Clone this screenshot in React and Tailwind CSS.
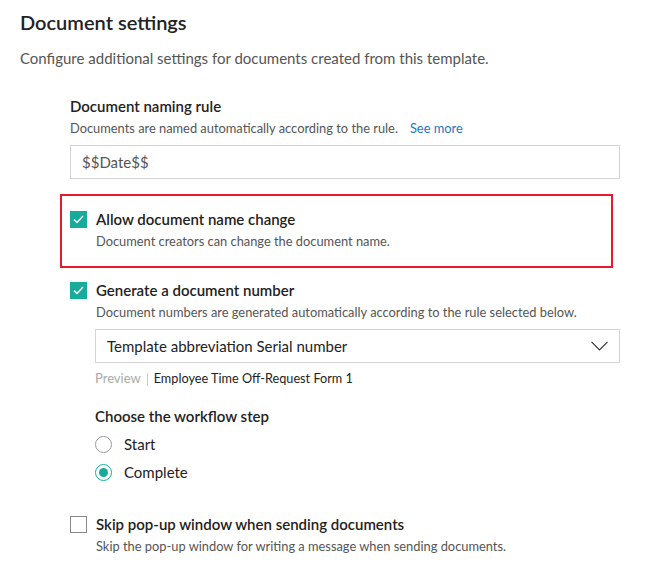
const font = { fontFamily: "'Source Sans Pro', Lato, 'Noto Sans', sans-serif" }

function Check({ checked }) {
  if (!checked) {
    return <span className="block h-[17px] w-[17px] shrink-0 border border-[#888] bg-white" />
  }
  return (
    <span className="flex h-[17px] w-[17px] shrink-0 items-center justify-center bg-[#17ab9b]">
      <svg width="11" height="9" viewBox="0 0 11 9" fill="none">
        <path d="M1 4.5l3 3L10 1" stroke="white" strokeWidth="1.5" />
      </svg>
    </span>
  )
}

function Radio({ checked }) {
  if (checked) {
    return (
      <span className="flex h-[17px] w-[17px] shrink-0 items-center justify-center rounded-full border-[1.5px] border-[#17ab9b]">
        <span className="h-[9px] w-[9px] rounded-full bg-[#17ab9b]" />
      </span>
    )
  }
  return <span className="block h-[17px] w-[17px] shrink-0 rounded-full border-[1.5px] border-[#999]" />
}

function Option({ checked, title, desc }) {
  return (
    <div>
      <div className="flex h-[22px] items-center gap-[9px]">
        <Check checked={checked} />
        <span className="text-[15px] font-semibold text-[#222]">{title}</span>
      </div>
      <p className="mt-[1px] pl-[26px] text-[12.85px] leading-[20px] text-[#555]">{desc}</p>
    </div>
  )
}

export default function App() {
  return (
    <div className="h-[574px] w-[658px] bg-white pl-[20px] pt-[8px]" style={font}>
      <h1 className="h-[28px] text-[20px] font-semibold leading-[28px] text-[#222]">Document settings</h1>
      <p className="mt-[11px] text-[15px] leading-[22px] text-[#555]">
        Configure additional settings for documents created from this template.
      </p>

      <div className="mt-[26px] w-[550px] pl-[50px] box-content">
        <h2 className="text-[15px] font-semibold leading-[22px] text-[#222]">Document naming rule</h2>
        <p className="mt-[1px] text-[12.85px] leading-[20px] text-[#555]">
          Documents are named automatically according to the rule.
          <span className="ml-[12px] text-[#1f73c4]">See more</span>
        </p>
        <div className="mt-[7px] flex h-[34px] items-center border border-[#d4d4d4] px-[11px] text-[15px] text-[#555]">
          $$Date$$
        </div>

        <div className="-ml-[10px] mt-[15px] w-[553px] border-2 border-[#e8192c] pb-[15px] pl-[8px] pt-[12px]">
          <Option
            checked
            title="Allow document name change"
            desc="Document creators can change the document name."
          />
        </div>

        <div className="mt-[11px]">
          <Option
            checked
            title="Generate a document number"
            desc="Document numbers are generated automatically according to the rule selected below."
          />
          <div className="ml-[25px]">
            <div className="mt-[7px] flex h-[34px] items-center justify-between border border-[#d4d4d4] pl-[11px] pr-[11px]">
              <span className="text-[15px] text-[#222]">Template abbreviation Serial number</span>
              <svg width="17" height="10" viewBox="0 0 17 10" fill="none">
                <path d="M0.5 0.8l8 8 8-8" stroke="#333" strokeWidth="1.2" />
              </svg>
            </div>
            <div className="mt-[6px] flex h-[20px] items-center text-[12.7px]">
              <span className="text-[13px] text-[#aaa]">Preview</span>
              <span className="mx-[6px] h-[13px] w-px bg-[#ccc]" />
              <span className="text-[#222]">Employee Time Off-Request Form 1</span>
            </div>
            <h3 className="mt-[16px] text-[15px] font-semibold leading-[22px] text-[#222]">Choose the workflow step</h3>
            <div className="mt-[6px] flex h-[22px] items-center gap-[12px]">
              <Radio />
              <span className="text-[15px] text-[#222]">Start</span>
            </div>
            <div className="mt-[6px] flex h-[22px] items-center gap-[12px]">
              <Radio checked />
              <span className="text-[15px] text-[#222]">Complete</span>
            </div>
          </div>
        </div>

        <div className="mt-[30px]">
          <Option
            title="Skip pop-up window when sending documents"
            desc="Skip the pop-up window for writing a message when sending documents."
          />
        </div>
      </div>
    </div>
  )
}
